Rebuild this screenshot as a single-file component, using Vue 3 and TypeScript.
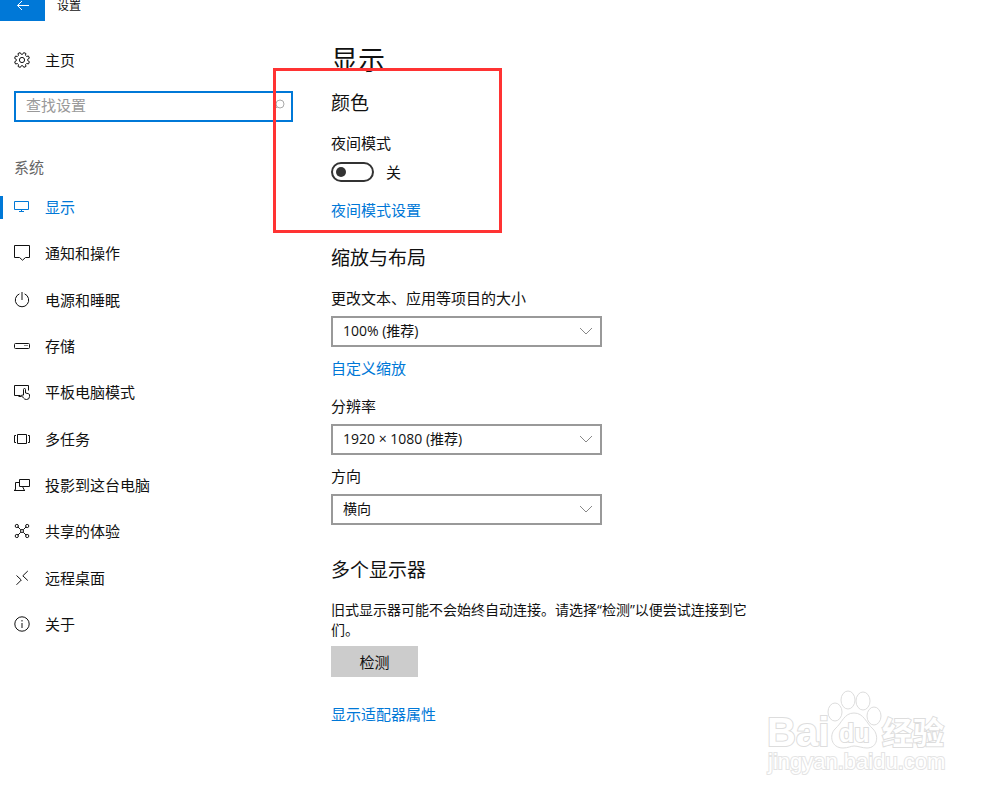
<script setup lang="ts">
import { ref } from 'vue'

interface NavItem {
  id: string
  label: string
}

const items: NavItem[] = [
  { id: 'display', label: '显示' },
  { id: 'notify', label: '通知和操作' },
  { id: 'power', label: '电源和睡眠' },
  { id: 'storage', label: '存储' },
  { id: 'tablet', label: '平板电脑模式' },
  { id: 'multitask', label: '多任务' },
  { id: 'project', label: '投影到这台电脑' },
  { id: 'shared', label: '共享的体验' },
  { id: 'remote', label: '远程桌面' },
  { id: 'about', label: '关于' },
]

const active = ref('display')
const search = ref('')
const nightMode = ref(false)
const scale = ref('100% (推荐)')
const resolution = ref('1920 × 1080 (推荐)')
const orientation = ref('横向')

// Outline of an eight-toothed gear centred in a 16-unit box
function gearPath(): string {
  const points: string[] = []
  const profile: [number, number][] = [
    [-15, 5.8],
    [-9, 7.6],
    [9, 7.6],
    [15, 5.8],
  ]
  for (let tooth = 0; tooth < 8; tooth++) {
    for (const [offset, radius] of profile) {
      const angle = ((tooth * 45 + 22 + offset) * Math.PI) / 180
      points.push(`${(8 + radius * Math.cos(angle)).toFixed(2)} ${(8 + radius * Math.sin(angle)).toFixed(2)}`)
    }
  }
  return `M${points.join('L')}Z`
}
const gear = gearPath()
</script>

<template>
  <div class="page">
    <header class="topbar">
      <button class="back" type="button" aria-label="返回">
        <svg class="arrow" viewBox="0 0 14 11" aria-hidden="true">
          <path d="M13 5.5H1.5M6 1L1.5 5.5L6 10" />
        </svg>
      </button>
      <span class="app-name">设置</span>
    </header>

    <div class="columns">
      <aside class="sidebar">
        <a class="home" href="#home">
          <svg class="icon" viewBox="0 0 16 16" aria-hidden="true">
            <path :d="gear" stroke-linejoin="round" />
            <circle cx="8" cy="8" r="2.6" />
          </svg>
          <span>主页</span>
        </a>

        <div class="search">
          <input v-model="search" type="text" placeholder="查找设置" aria-label="查找设置" />
          <svg class="glass" viewBox="0 0 12 12" aria-hidden="true">
            <circle cx="7" cy="5" r="4" />
            <path d="M4.2 7.8L1 11" />
          </svg>
        </div>

        <h2 class="group">系统</h2>
        <nav class="nav">
          <a
            v-for="item in items"
            :key="item.id"
            class="nav-item"
            :class="{ active: item.id === active }"
            :href="'#' + item.id"
            @click="active = item.id"
          >
            <svg class="icon" viewBox="0 0 16 16" aria-hidden="true">
              <g v-if="item.id === 'display'">
                <path d="M.5 2.5h14v8H.5zM7.5 10.5v2M5 12.5h5" />
              </g>
              <g v-else-if="item.id === 'notify'">
                <path d="M.5.5h15v12h-4l-3 2.7-3-2.7h-5z" />
              </g>
              <g v-else-if="item.id === 'power'">
                <path d="M5.4 1.9a6.7 6.7 0 1 0 5.2 0M8 0v8" />
              </g>
              <g v-else-if="item.id === 'storage'">
                <rect x=".5" y="5.5" width="15" height="5" rx="1" />
                <path d="M10.5 7.5h1M12.5 7.5h1" />
              </g>
              <g v-else-if="item.id === 'tablet'">
                <path d="M6.5 11.5h-6v-10h14v5M4.5 12.5h3" />
                <path d="M9.5 11V5.5a1 1 0 0 1 2 0V9l3 .7q1 .3 1 1.3v1.6q0 2.9-3 2.9-2 0-3-1.5L7.2 11.5q.8-1.2 2.3.3" />
              </g>
              <g v-else-if="item.id === 'multitask'">
                <path d="M3.5 3.5h9v9h-9zM2 4.5H.5v7H2M14 4.5h1.5v7H14" />
              </g>
              <g v-else-if="item.id === 'project'">
                <path d="M5.5 9.5v-7h10v7zM5.5 5.5h-4v7M0 13.5h11M1.5 12L.5 13.5M8.5 9.5L10.5 13.5" />
              </g>
              <g v-else-if="item.id === 'shared'">
                <path d="M3.8 3.8l3 3M9.2 9.2l3 3M12.2 3.8l-3 3M6.8 9.2l-3 3" />
                <circle cx="2.8" cy="3" r="1.6" />
                <circle cx="13.2" cy="3" r="1.6" />
                <circle cx="2.8" cy="13" r="1.6" />
                <circle cx="13.2" cy="13" r="1.6" />
                <circle cx="8" cy="8" r="1.5" />
              </g>
              <g v-else-if="item.id === 'remote'">
                <path d="M2.5 5.5L7.3 10L2.5 14.8M13.8 1L8.8 5.8L13.8 10.5" />
              </g>
              <g v-else>
                <circle cx="8" cy="8" r="7.2" />
                <path d="M8 7v5M8 4v1.5" />
              </g>
            </svg>
            <span>{{ item.label }}</span>
          </a>
        </nav>
      </aside>

      <main class="content">
        <div class="highlight" aria-hidden="true"></div>
        <h1>显示</h1>

        <section>
          <h2>颜色</h2>
          <label class="field-label" for="night">夜间模式</label>
          <div class="switch-row">
            <input id="night" v-model="nightMode" class="switch" type="checkbox" role="switch" />
            <span>{{ nightMode ? '开' : '关' }}</span>
          </div>
          <a class="link" href="#night-settings">夜间模式设置</a>
        </section>

        <section>
          <h2>缩放与布局</h2>
          <label class="field-label" for="scale">更改文本、应用等项目的大小</label>
          <div class="dropdown">
            <select id="scale" v-model="scale">
              <option>100% (推荐)</option>
              <option>125%</option>
            </select>
            <svg class="chevron" viewBox="0 0 14 8" aria-hidden="true"><path d="M1 1l6 6l6-6" /></svg>
          </div>
          <a class="link scaling" href="#custom-scaling">自定义缩放</a>

          <label class="field-label resolution" for="resolution">分辨率</label>
          <div class="dropdown">
            <select id="resolution" v-model="resolution">
              <option>1920 × 1080 (推荐)</option>
              <option>1280 × 720</option>
            </select>
            <svg class="chevron" viewBox="0 0 14 8" aria-hidden="true"><path d="M1 1l6 6l6-6" /></svg>
          </div>

          <label class="field-label orientation" for="orientation">方向</label>
          <div class="dropdown">
            <select id="orientation" v-model="orientation">
              <option>横向</option>
              <option>纵向</option>
            </select>
            <svg class="chevron" viewBox="0 0 14 8" aria-hidden="true"><path d="M1 1l6 6l6-6" /></svg>
          </div>
        </section>

        <section class="displays">
          <h2>多个显示器</h2>
          <p>旧式显示器可能不会始终自动连接。请选择“检测”以便尝试连接到它们。</p>
          <button class="detect" type="button">检测</button>
          <a class="link" href="#adapter">显示适配器属性</a>
        </section>
      </main>
    </div>

    <svg class="watermark" viewBox="0 0 184 92" aria-hidden="true">
      <text class="mark" x="3" y="58" font-size="40">Bai</text>
      <g class="paw">
        <ellipse cx="71" cy="24" rx="7" ry="9" />
        <ellipse cx="84" cy="12" rx="7" ry="9" />
        <ellipse cx="99" cy="13" rx="7" ry="9" />
        <ellipse cx="110" cy="28" rx="7" ry="9" />
        <path d="M90 25C80 25 78 35 71 41C65 47 67 60 79 60C84 60 87 58 90 58C94 58 98 60 103 60C114 60 115 47 109 41C102 35 100 25 90 25Z" />
      </g>
      <text class="mark" x="75" y="54" font-size="25">du</text>
      <text class="mark" x="118" y="56" font-size="31">经验</text>
      <text class="site" x="4" y="81" font-size="22">jingyan.baidu.com</text>
    </svg>
  </div>
</template>

<style>
body {
  margin: 0;
  background: #fff;
}
</style>

<style scoped>
.page {
  position: relative;
  min-height: 100vh;
  overflow: hidden;
  background: #fff;
  color: #111;
  font: 15px/20px "Open Sans", "Noto Sans CJK SC", sans-serif;
}
h1,
h2,
p {
  margin: 0;
  font-weight: 400;
}
a {
  color: inherit;
  text-decoration: none;
}
svg {
  display: block;
  flex: none;
  fill: none;
  stroke: currentColor;
}
input,
select,
button {
  box-sizing: border-box;
  margin: 0;
  border-radius: 0;
  color: inherit;
  font: inherit;
}

.topbar {
  display: flex;
  align-items: flex-start;
  gap: 12px;
  height: 21px;
}
.back {
  display: flex;
  justify-content: center;
  width: 45px;
  height: 21px;
  padding: 0;
  border: 0;
  background: #0078d7;
  color: #fff;
}
.arrow {
  width: 14px;
  height: 11px;
}
.app-name {
  font-size: 12px;
  line-height: 12px;
}

.columns {
  display: grid;
  grid-template-columns: 293px minmax(0, 1fr);
  column-gap: 38px;
}
.sidebar {
  padding-top: 19px;
}
.icon {
  width: 16px;
  height: 16px;
}
.home,
.nav-item {
  display: flex;
  align-items: center;
  gap: 15px;
  padding-left: 14px;
}
.home {
  height: 40px;
}
.search {
  position: relative;
  margin: 11px 0 0 14px;
}
.search input {
  display: block;
  width: 100%;
  height: 31px;
  padding: 0 28px 4px 10px;
  border: 2px solid #0078d7;
  background: #fff;
  outline: none;
}
.search input::placeholder {
  color: #999;
  opacity: 1;
}
.glass {
  position: absolute;
  top: 8px;
  right: 8px;
  width: 12px;
  height: 12px;
  color: #aaa;
}
.group {
  margin: 35px 0 7px 14px;
  color: #666;
  font-size: 15px;
}
.nav {
  display: grid;
  grid-auto-rows: 1fr;
  min-height: 463px;
}
.nav-item {
  position: relative;
}
.nav-item.active {
  color: #0078d7;
}
.nav-item.active::before {
  content: "";
  position: absolute;
  left: 0;
  width: 3px;
  height: 23px;
  background: #0078d7;
}

.content {
  position: relative;
  max-width: 436px;
  padding-top: 21px;
}
.highlight {
  position: absolute;
  top: 47px;
  left: -58px;
  box-sizing: border-box;
  width: 229px;
  height: 165px;
  border: 3px solid #ff3333;
  pointer-events: none;
}
h1 {
  margin-bottom: 11px;
  font-size: 27px;
  line-height: 36px;
}
.content h2 {
  margin-bottom: 16px;
  font-size: 19px;
  line-height: 28px;
}
.field-label,
.link {
  display: block;
}
.link {
  width: fit-content;
  color: #0078d7;
}
.switch-row {
  display: flex;
  align-items: center;
  gap: 12px;
  margin: 9px 0 18px;
}
.switch {
  display: flex;
  align-items: center;
  width: 43px;
  height: 20px;
  padding-left: 3px;
  border: 2px solid #333;
  border-radius: 10px;
  background: #fff;
  appearance: none;
}
.switch::before {
  content: "";
  width: 10px;
  height: 10px;
  border-radius: 50%;
  background: #333;
}
.switch:checked::before {
  margin-left: 22px;
}
section + section {
  margin-top: 24px;
}
.dropdown {
  position: relative;
  width: 271px;
  margin-top: 8px;
}
.dropdown select {
  display: block;
  width: 100%;
  height: 31px;
  padding: 0 30px 2px 10px;
  border: 2px solid #999;
  background: #fff;
  font-size: 14px;
  appearance: none;
}
.chevron {
  position: absolute;
  top: 11px;
  right: 9px;
  width: 14px;
  height: 8px;
  color: #888;
  pointer-events: none;
}
.scaling {
  margin-top: 11px;
}
.resolution {
  margin-top: 18px;
}
.orientation {
  margin-top: 11px;
}
section.displays {
  margin-top: 31px;
}
.displays p {
  font-size: 14px;
}
.detect {
  display: block;
  width: 87px;
  height: 31px;
  margin: 6px 0 27px;
  padding: 0;
  border: 0;
  background: #ccc;
}

.watermark {
  position: absolute;
  right: 52px;
  bottom: 17px;
  width: 184px;
  height: 92px;
  color: #ddd;
  pointer-events: none;
}
.watermark text {
  fill: #fff;
  paint-order: stroke;
  stroke-width: 2px;
  font-family: "Liberation Sans", "Noto Sans CJK SC", sans-serif;
}
.watermark .site {
  color: #e4e4e4;
}
.mark {
  font-weight: 700;
}
.paw {
  stroke-width: 1px;
}
.paw path,
.paw ellipse {
  fill: #fff;
}
</style>
